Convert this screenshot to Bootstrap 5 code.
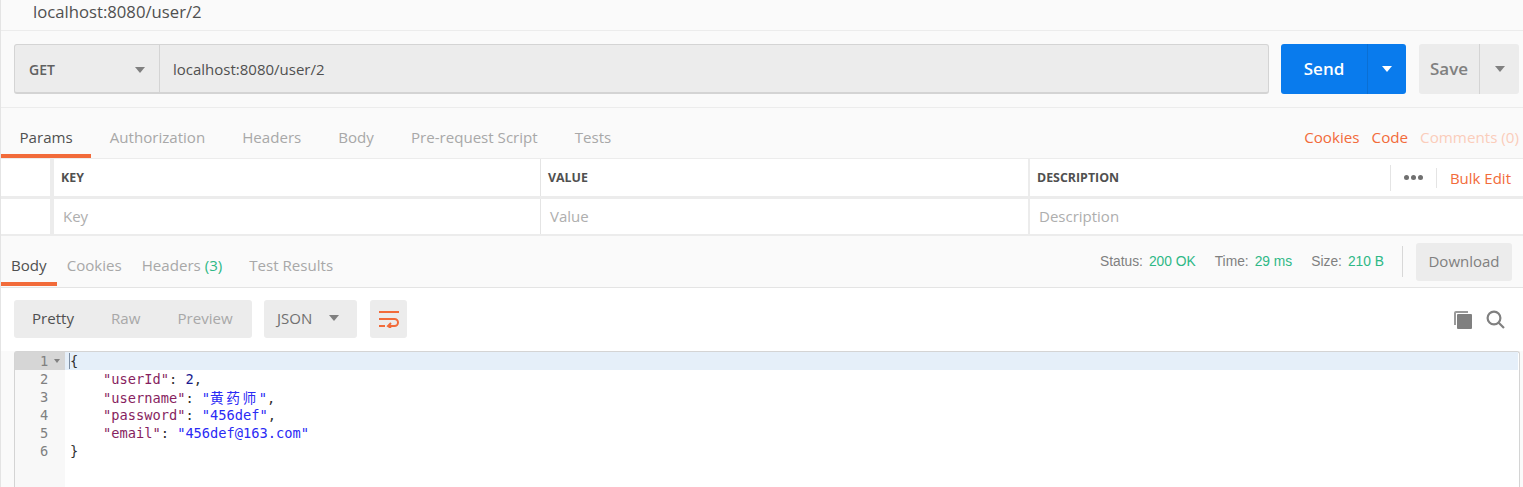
<!DOCTYPE html>
<html lang="en">
<head>
<meta charset="utf-8">
<title>Postman request</title>
<link rel="stylesheet" href="https://cdn.jsdelivr.net/npm/bootstrap@5.3.0/dist/css/bootstrap.min.css">
<style>
html,body{height:487px;overflow:hidden}
body{background:#fafafa;font-family:"Open Sans","Noto Sans",sans-serif;font-size:15px;color:#505050;border-left:1px solid #e4e4e4}
.titlebar{height:31px;border-bottom:1px solid #ececec;padding:0 0 0 32px;font-size:16.7px;line-height:24px;color:#505050}
.urlrow{height:77px;border-bottom:1px solid #ececec;padding:13px 4px 0 13px;gap:12px}
.urlbox{flex:1;height:50px;background:#ececec;border:1px solid #d4d4d4;border-bottom-width:2px;border-radius:3px}
.method{width:145px;border-right:1px solid #d4d4d4;padding:2px 14px 0;font-weight:600;font-size:14px;color:#606060}
.urltext{padding:2px 0 0 13px;font-size:15px;color:#505050}
.caret-down{width:0;height:0;border-left:5px solid transparent;border-right:5px solid transparent;border-top:6px solid #808080}
.caret-white{border-top-color:#fff}
.sendbtn{width:125px;height:50px;background:#097bed;color:#fff;border-radius:3px;font-weight:600;font-size:17px}
.sendmain{width:87px;border-right:1px solid #0a6fd4;height:100%}
.savebtn{width:100px;height:50px;background:#ececec;color:#808080;border-radius:3px;font-weight:600;font-size:17px;margin-left:1px}
.savemain{width:61px;border-right:1px solid #d4d4d4;height:100%}
.tabrow{height:51px;border-bottom:1px solid #ececec}
.tabitem{height:50px;color:#a8a8a8;font-size:15.1px;padding:17px 18.5px 0;border-bottom:4px solid transparent;line-height:24px}
.tabitem.onsel{color:#505050;border-bottom-color:#f26b3a}
.tablinks{gap:12px;font-size:15.2px;padding:17px 4px 0 0;color:#f26b3a;line-height:24px}
.fadedlink{color:#fbcdbb}
.paramrow{background:#fff;border-bottom:3px solid #ececec}
.paramhead{height:40px}
.parambody{height:37px;border-bottom-width:2px}
.cellgap{width:49px;flex:none}
.cellsep{width:4px;flex:none;background:#ececec}
.cellkey{width:487px;flex:none;border-right:1px solid #e4e4e4;padding-left:7px}
.cellval{width:489px;flex:none;border-right:2px solid #ececec;padding-left:7px}
.celldesc{flex:1;padding-left:7px}
.headlabel{font-size:12.4px;font-weight:700;color:#505050;padding-top:2px}
.placeholder-txt{font-size:15px;color:#aeaeae;padding-left:2px}
.vrule{width:1px;height:26px;background:#e4e4e4}
.vrule.shortrule{height:20px}
.dots{width:45px;gap:2px}
.dots i{width:5px;height:5px;border-radius:50%;background:#707070;display:block}
.bulk{font-size:15px;color:#f26b3a;padding:2px 12px 0 13px}
.resptabs{height:52px;border-bottom:1px solid #e4e4e4}
.resptabs .tabitem{padding:17px 10px 0}
.resptabs .headerstab{margin-right:7px}
.count{color:#2eb886}
.statusbar{font-family:"Liberation Sans",Arial,sans-serif;font-size:13.8px;color:#808080;padding:0 11px 0 0;gap:19px}
.statustxt{margin-top:2px}
.okval{color:#2eb886;margin-left:6px}
.statusrule{width:1px;height:31px;background:#d8d8d8;margin-left:-1px}
.dlbtn{width:96px;height:38px;background:#ececec;color:#808080;border-radius:3px;font-family:"Open Sans",sans-serif;font-size:15px;margin-left:-6px}
.toolrow{height:63px;background:#fff;padding:12px 18px 0 13px}
.segbtns{height:38px;background:#ececec;border-radius:3px;width:238px;font-size:15.1px;color:#a8a8a8;padding:0 0 2px 18px}
.segbtns span{margin-right:37px}
.segbtns .onsel{color:#505050}
.jsonsel{height:38px;width:93px;background:#ececec;border-radius:3px;margin-left:12px;padding:0 18px 2px 13px;font-size:15px;color:#707070}
.wrapbtn{width:37px;height:38px;background:#ececec;border-radius:3px;margin-left:13px}
.toolicons{gap:14px;height:38px}
.editor{background:#fff;margin:0 3px 0 13px;height:136px;border:1px solid #d4d4d4;border-bottom:0;border-radius:3px 3px 0 0;font-family:"DejaVu Sans Mono","Noto Sans CJK SC",monospace;font-size:13.7px;line-height:18px}
.gutter{width:50px;flex:none;background:#f8f8f8;color:#808080}
.gutter div{height:18px;padding-left:25px}
.gutter .hotline{background:#d6d6d6;position:relative}
.fold{position:absolute;left:39px;top:7px;border-left:3.5px solid transparent;border-right:3.5px solid transparent;border-top:4px solid #808080}
.codearea{flex:1;color:#303030}
.codeline{height:18px;padding-left:5px;white-space:pre}
.codeline.hotline{background:#e5eff9;margin-right:1px}
.cursorbar{border-left:1px solid #7d8ea3;margin-left:-1px}
.jk{color:#871f5f}
.js{color:#2a2af5}
.jn{color:#1a1a90}
.cjk{font-family:"Noto Sans CJK SC",sans-serif;letter-spacing:2.5px}
</style>
</head>
<body>
<div class="titlebar">localhost:8080/user/2</div>

<div class="urlrow d-flex">
  <div class="urlbox d-flex">
    <div class="method d-flex align-items-center justify-content-between"><span>GET</span><span class="caret-down"></span></div>
    <div class="urltext d-flex align-items-center">localhost:8080/user/2</div>
  </div>
  <div class="sendbtn d-flex">
    <div class="sendmain d-flex align-items-center justify-content-center">Send</div>
    <div class="flex-fill d-flex align-items-center justify-content-center"><span class="caret-down caret-white"></span></div>
  </div>
  <div class="savebtn d-flex">
    <div class="savemain d-flex align-items-center justify-content-center">Save</div>
    <div class="flex-fill d-flex align-items-center justify-content-center"><span class="caret-down"></span></div>
  </div>
</div>

<div class="tabrow d-flex justify-content-between">
  <div class="d-flex">
    <div class="tabitem onsel">Params</div>
    <div class="tabitem">Authorization</div>
    <div class="tabitem">Headers</div>
    <div class="tabitem">Body</div>
    <div class="tabitem">Pre-request Script</div>
    <div class="tabitem">Tests</div>
  </div>
  <div class="tablinks d-flex"><span>Cookies</span><span>Code</span><span class="fadedlink">Comments (0)</span></div>
</div>

<div class="paramrow paramhead d-flex">
  <div class="cellgap"></div><div class="cellsep"></div>
  <div class="cellkey d-flex align-items-center"><span class="headlabel">KEY</span></div>
  <div class="cellval d-flex align-items-center"><span class="headlabel">VALUE</span></div>
  <div class="celldesc d-flex align-items-center justify-content-between">
    <span class="headlabel">DESCRIPTION</span>
    <div class="d-flex align-items-center">
      <span class="vrule"></span>
      <div class="dots d-flex align-items-center justify-content-center"><i></i><i></i><i></i></div>
      <span class="vrule shortrule"></span>
      <span class="bulk">Bulk Edit</span>
    </div>
  </div>
</div>
<div class="paramrow parambody d-flex">
  <div class="cellgap"></div><div class="cellsep"></div>
  <div class="cellkey d-flex align-items-center"><span class="placeholder-txt">Key</span></div>
  <div class="cellval d-flex align-items-center"><span class="placeholder-txt">Value</span></div>
  <div class="celldesc d-flex align-items-center"><span class="placeholder-txt">Description</span></div>
</div>

<div class="resptabs d-flex justify-content-between">
  <div class="d-flex">
    <div class="tabitem onsel">Body</div>
    <div class="tabitem">Cookies</div>
    <div class="tabitem headerstab">Headers <span class="count">(3)</span></div>
    <div class="tabitem">Test Results</div>
  </div>
  <div class="statusbar d-flex align-items-center">
    <span class="statustxt">Status:<span class="okval">200 OK</span></span>
    <span class="statustxt">Time:<span class="okval">29 ms</span></span>
    <span class="statustxt">Size:<span class="okval">210 B</span></span>
    <span class="statusrule"></span>
    <span class="dlbtn d-flex align-items-center justify-content-center">Download</span>
  </div>
</div>

<div class="toolrow d-flex align-items-start">
  <div class="segbtns d-flex align-items-center"><span class="onsel">Pretty</span><span>Raw</span><span>Preview</span></div>
  <div class="jsonsel d-flex align-items-center justify-content-between"><span>JSON</span><span class="caret-down"></span></div>
  <div class="wrapbtn d-flex align-items-center justify-content-center">
    <svg width="20" height="18" viewBox="0 0 20 18" fill="none" stroke="#f26b3a" stroke-width="2"><path d="M0 2H20"/><path d="M0 9H15.5a3.5 3.5 0 0 1 0 7H9"/><path d="M12 13l-3 3 3 2"/><path d="M0 16H6"/></svg>
  </div>
  <div class="toolicons ms-auto d-flex align-items-center">
    <svg width="19" height="19" viewBox="0 0 19 19"><path d="M3 1H15V3H3V15H1V3a2 2 0 0 1 2-2Z" fill="#9a9a9a"/><rect x="4" y="4" width="15" height="15" rx="1" fill="#808080"/></svg>
    <svg width="19" height="19" viewBox="0 0 19 19" fill="none" stroke="#808080" stroke-width="2.2"><circle cx="8" cy="8" r="6.4"/><path d="M12.5 12.5L18 18"/></svg>
  </div>
</div>

<div class="editor d-flex">
  <div class="gutter">
    <div class="hotline">1<span class="fold"></span></div><div>2</div><div>3</div><div>4</div><div>5</div><div>6</div>
  </div>
  <div class="codearea">
    <div class="codeline hotline"><span class="cursorbar">{</span></div>
    <div class="codeline">    <span class="jk">"userId"</span>: <span class="jn">2</span>,</div>
    <div class="codeline">    <span class="jk">"username"</span>: <span class="js">"<span class="cjk">黄药师</span>"</span>,</div>
    <div class="codeline">    <span class="jk">"password"</span>: <span class="js">"456def"</span>,</div>
    <div class="codeline">    <span class="jk">"email"</span>: <span class="js">"456def@163.com"</span></div>
    <div class="codeline">}</div>
  </div>
</div>
<script src="https://cdn.jsdelivr.net/npm/bootstrap@5.3.0/dist/js/bootstrap.bundle.min.js"></script>
</body>
</html>
